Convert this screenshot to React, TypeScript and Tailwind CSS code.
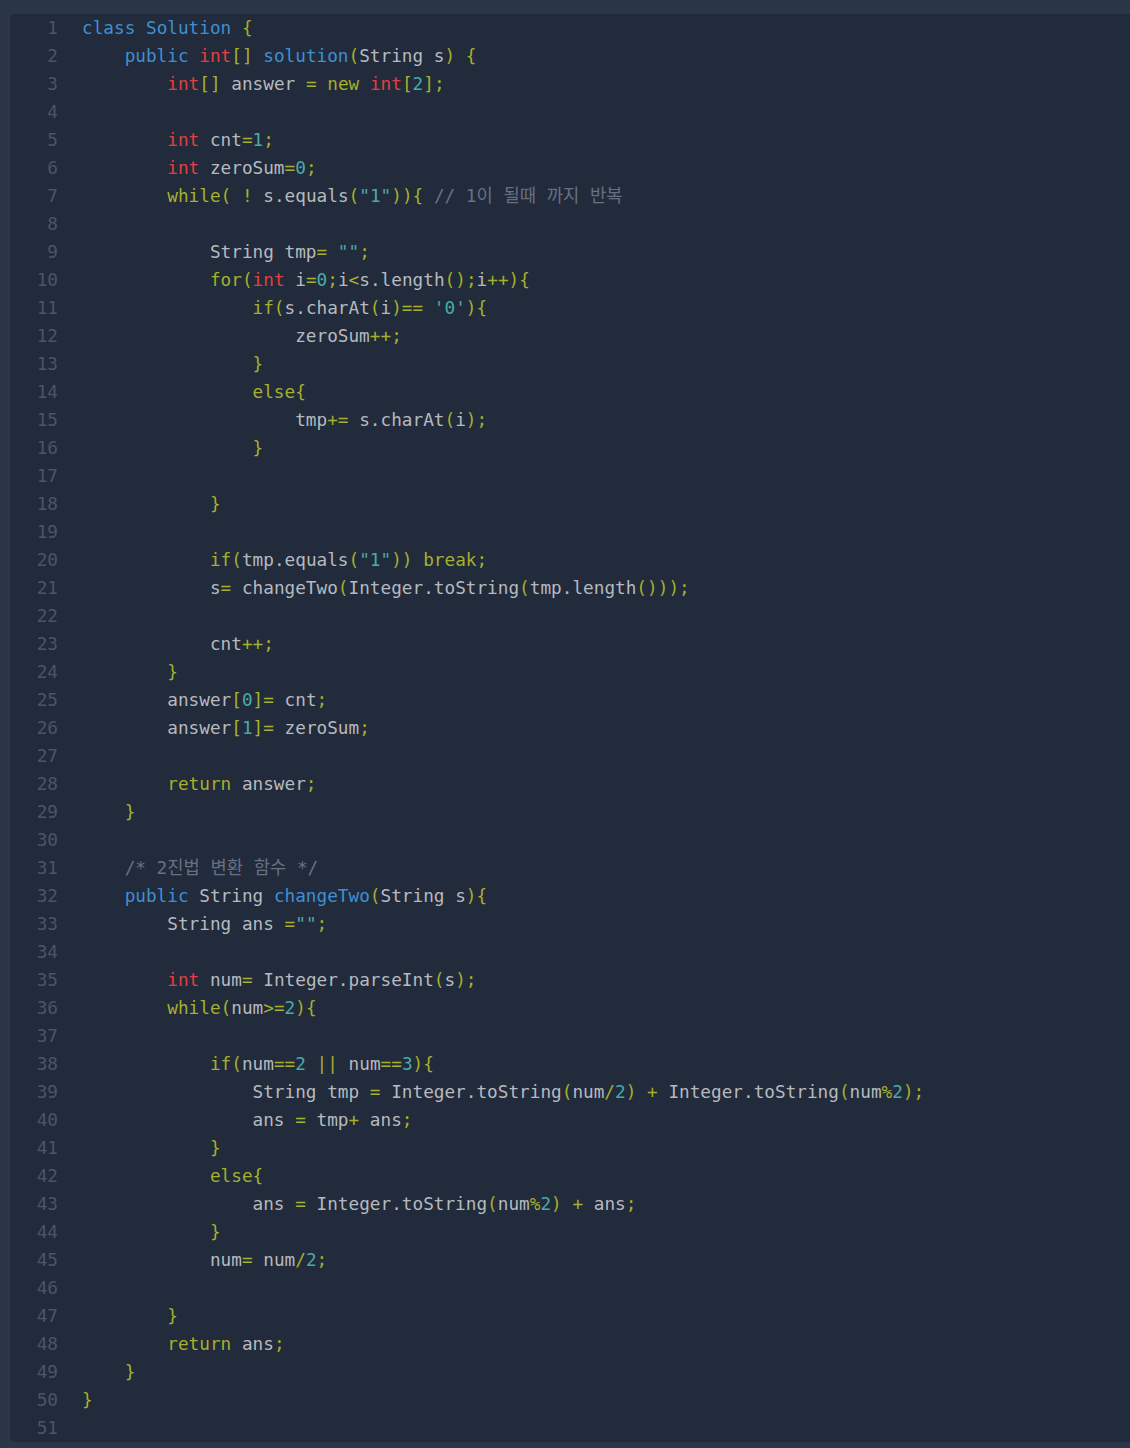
import React from "react"

const code = `class Solution {
    public int[] solution(String s) {
        int[] answer = new int[2];

        int cnt=1;
        int zeroSum=0;
        while( ! s.equals("1")){ // 1이 될때 까지 반복

            String tmp= "";
            for(int i=0;i<s.length();i++){
                if(s.charAt(i)== '0'){
                    zeroSum++;
                }
                else{
                    tmp+= s.charAt(i);
                }

            }

            if(tmp.equals("1")) break;
            s= changeTwo(Integer.toString(tmp.length()));

            cnt++;
        }
        answer[0]= cnt;
        answer[1]= zeroSum;

        return answer;
    }

    /* 2진법 변환 함수 */
    public String changeTwo(String s){
        String ans ="";

        int num= Integer.parseInt(s);
        while(num>=2){

            if(num==2 || num==3){
                String tmp = Integer.toString(num/2) + Integer.toString(num%2);
                ans = tmp+ ans;
            }
            else{
                ans = Integer.toString(num%2) + ans;
            }
            num= num/2;

        }
        return ans;
    }
}
`

const BLUE = "text-[#3f8fd2]"
const RED = "text-[#e0403d]"
const OLIVE = "text-[#a5b02b]"
const TEAL = "text-[#47abab]"
const PLAIN = "text-[#b6babf]"
const COMMENT = "text-[#687182]"

const keywordsBlue = new Set(["class", "public"])
const keywordsRed = new Set(["int"])
const keywordsOlive = new Set(["new", "while", "for", "if", "else", "return", "break"])

type Token = { text: string; cls: string }

function tokenize(line: string): Token[] {
  const out: Token[] = []
  let body = line
  let comment = ""
  if (line.trim().startsWith("/*")) {
    return [{ text: line, cls: COMMENT }]
  }
  const ci = line.indexOf("//")
  if (ci >= 0) {
    body = line.slice(0, ci)
    comment = line.slice(ci)
  }
  const isDecl = /^\s*(class|public)\b/.test(body)
  const re = /("[^"]*"|'[^']*'|\d+|[A-Za-z_]\w*|\s+|.)/g
  const parts = body.match(re) || []
  parts.forEach((p, i) => {
    let cls = PLAIN
    if (/^["']/.test(p) || /^\d+$/.test(p)) cls = TEAL
    else if (/^[A-Za-z_]/.test(p)) {
      if (keywordsBlue.has(p)) cls = BLUE
      else if (keywordsRed.has(p)) cls = RED
      else if (keywordsOlive.has(p)) cls = OLIVE
      else if (isDecl && (p === "Solution" || parts[i + 1] === "(")) cls = BLUE
    } else if (/^[()[\]{};=+!<>|%/-]$/.test(p)) cls = OLIVE
    out.push({ text: p, cls })
  })
  if (comment) out.push({ text: comment, cls: COMMENT })
  return out
}

export default function App() {
  const lines = code.split("\n")

  return (
    <div className="min-h-[1448px] bg-[#2b3748] pt-[14px] pl-[10px] pb-[7px]">
      <div
        className="bg-[#222b3c] rounded-l-[5px] flex text-[17.72px] leading-[28px]"
        style={{ fontFamily: '"DejaVu Sans Mono", "Noto Sans CJK KR", monospace' }}
      >
        {/* Gutter */}
        <div className="w-[48px] shrink-0 text-right text-[#4b5567] select-none">
          {lines.map((_, i) => (
            <div key={i}>{i + 1}</div>
          ))}
        </div>

        {/* Code */}
        <div className="pl-[24px] flex-1 whitespace-pre">
          {lines.map((line, i) => (
            <div key={i} className="h-[28px]">
              {tokenize(line).map((t, j) => (
                <span key={j} className={t.cls}>
                  {t.text}
                </span>
              ))}
            </div>
          ))}
        </div>
      </div>
    </div>
  )
}
